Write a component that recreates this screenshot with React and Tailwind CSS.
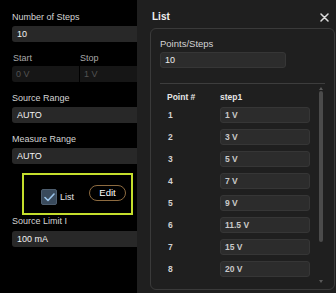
import React from 'react'

const points = ['1 V', '3 V', '5 V', '7 V', '9 V', '11.5 V', '15 V', '20 V']

const Label = ({ children, className = '' }) => (
    <div className={`h-3 leading-3 text-[9px] text-[#d4d4d4] ${className}`}>{children}</div>
)

const Field = ({ children, className = '' }) => (
    <div className={`h-4 w-[180px] rounded-[3px] bg-[#282828] px-[5px] text-[9px] leading-4 text-[#f2f2f2] ${className}`}>{children}</div>
)

const App = () => {
    return (
        <div className="relative w-[336px] h-[293px] overflow-hidden bg-black font-['Liberation_Sans',Arial,sans-serif]">
            {/* Settings form */}
            <div className="pl-3 pt-[11px] w-[200px]">
                <Label>Number of Steps</Label>
                <Field className="mt-[3px]">10</Field>

                <div className="mt-[10px] grid grid-cols-[67px_1fr] gap-x-[1px] w-[181px]">
                    <div className="h-3 leading-3 text-[9px] text-[#a9a9a9] pl-[1px]">Start</div>
                    <div className="h-3 leading-3 text-[9px] text-[#a9a9a9]">Stop</div>
                    <div className="mt-[2px] h-4 rounded-l-[3px] bg-[#161616] px-[4px] text-[9px] leading-4 text-[#525252]">0 V</div>
                    <div className="mt-[2px] h-4 rounded-r-[3px] bg-[#161616] px-[4px] text-[9px] leading-4 text-[#525252]">1 V</div>
                </div>

                <Label className="mt-[10px]">Source Range</Label>
                <Field className="mt-[3px]">AUTO</Field>

                <Label className="mt-[10px]">Measure Range</Label>
                <Field className="mt-[3px]">AUTO</Field>

                <div className="mt-[9px] ml-[10px] w-[111px] h-[42px] border-2 border-[#c4de2c] flex pl-[17px] pt-[10px]">
                    <div className="mt-[4px] flex items-start">
                        <div className="w-4 h-4 rounded-[2px] bg-[#394a5c] border border-[#4d5d6e] flex items-center justify-center">
                            <svg width="11" height="9" viewBox="0 0 11 9" fill="none">
                                <path d="M1 4.5 L4 7.5 L10 1" stroke="#9cc6ec" strokeWidth="1.6" strokeLinecap="round" strokeLinejoin="round" />
                            </svg>
                        </div>
                        <span className="ml-[3px] mt-[2px] text-[9px] leading-3 text-[#e4e4e4]">List</span>
                    </div>
                    <button className="ml-auto mr-[5px] w-[37px] h-4 rounded-full border border-[#8d6b40] text-[9.5px] leading-[14px] text-white">Edit</button>
                </div>

                <Label>Source Limit I</Label>
                <Field className="mt-[4px]">100 mA</Field>
            </div>

            {/* List drawer */}
            <aside className="absolute left-[137px] top-0 right-0 bottom-0 bg-[#1f1f1f] pl-[13px] pt-[11px]">
                <div className="flex items-center justify-between h-3 pl-[2px] pr-[7px]">
                    <h2 className="text-[10px] leading-3 font-bold text-[#f0f0f0]">List</h2>
                    <svg width="9" height="9" viewBox="0 0 9 9">
                        <path d="M1 1 L8 8 M8 1 L1 8" stroke="#dcdcdc" strokeWidth="1.5" strokeLinecap="round" />
                    </svg>
                </div>

                <div className="mt-[5px] mr-[1px] h-[262px] rounded-[6px] border border-[#3a3a3a] pl-[9px] pr-[9px] pt-[9px] flex flex-col">
                    <div className="h-3 leading-3 text-[9.5px] text-[#d4d4d4]">Points/Steps</div>
                    <div className="mt-[2px] h-4 w-[126px] rounded-[3px] bg-[#2c2c2c] border border-[#363636] px-[4px] text-[9px] leading-[14px] text-[#ededed]">10</div>

                    <div className="mt-[15px] h-px bg-[#3d3d3d]"></div>

                    <div className="flex flex-1">
                        <div className="flex-1">
                            <div className="mt-[7px] h-3 grid grid-cols-[60px_1fr] text-[8.5px] leading-3 font-bold text-[#e6e6e6]">
                                <span className="pl-[7px]">Point #</span>
                                <span>step1</span>
                            </div>
                            <div className="mt-[4px] flex flex-col gap-[6px]">
                                {points.map((v, i) => (
                                    <div key={i} className="grid grid-cols-[60px_90px] items-center">
                                        <span className="pl-[8px] text-[8.5px] font-bold text-[#d2d2d2]">{i + 1}</span>
                                        <div className="h-4 rounded-[3px] bg-[#2c2c2c] border border-[#363636] px-[4px] text-[8.5px] leading-[14px] font-semibold text-[#c9c9c9]">{v}</div>
                                    </div>
                                ))}
                            </div>
                        </div>

                        {/* scrollbar */}
                        <div className="w-[5px] mr-[2px] pt-[3px] pb-[6px] flex flex-col items-center">
                            <div className="w-0 h-0 border-l-[2.5px] border-r-[2.5px] border-b-[3px] border-l-transparent border-r-transparent border-b-[#5a5a5a]"></div>
                            <div className="mt-[1px] w-[4px] h-[151px] rounded-full bg-[#4b4b4b]"></div>
                            <div className="flex-1"></div>
                            <div className="w-0 h-0 border-l-[2.5px] border-r-[2.5px] border-t-[3px] border-l-transparent border-r-transparent border-t-[#5a5a5a]"></div>
                        </div>
                    </div>
                </div>
            </aside>
        </div>
    )
}

export default App
